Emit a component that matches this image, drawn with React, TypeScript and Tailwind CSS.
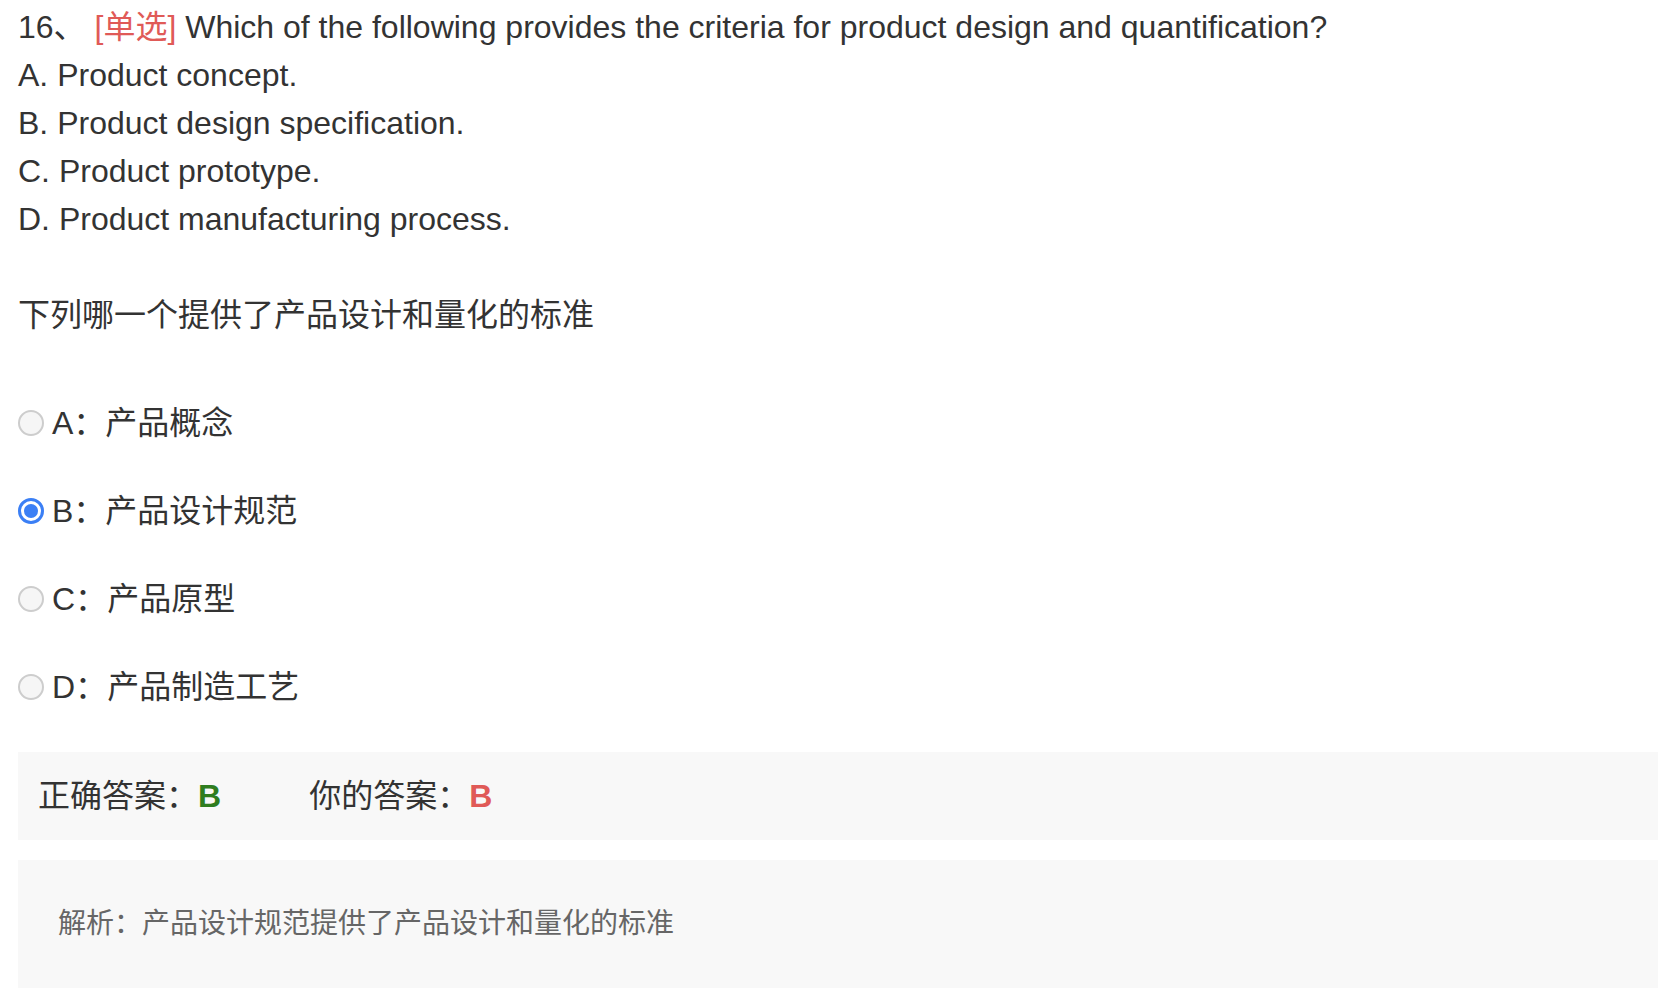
import React from 'react'

const options = [
  { key: 'A', text: '产品概念' },
  { key: 'B', text: '产品设计规范' },
  { key: 'C', text: '产品原型' },
  { key: 'D', text: '产品制造工艺' }
]

const selected = 'B'

function Radio({ checked }: { checked: boolean }) {
  if (checked) {
    return (
      <span className="flex h-[26px] w-[26px] shrink-0 items-center justify-center rounded-full border-[3px] border-[#3b7ff5] bg-white">
        <span className="h-[14px] w-[14px] rounded-full bg-[#3b7ff5]" />
      </span>
    )
  }
  return (
    <span className="h-[26px] w-[26px] shrink-0 rounded-full border-2 border-[#cdcdcd] bg-[#f6f6f6]" />
  )
}

export default function App() {
  return (
    <div
      className="min-h-screen bg-white text-[#333]"
      style={{ fontFamily: '"Liberation Sans", "Noto Sans CJK SC", sans-serif' }}
    >
      <div className="pl-[18px] pr-[16px] pt-[3px]">
        {/* 题干 */}
        <div className="text-[32px] leading-[48px]">
          <div>
            16、 <span className="text-[#e05a57]">[单选]</span> Which of the following provides the criteria for product design and quantification?
          </div>
          <div>A. Product concept.</div>
          <div>B. Product design specification.</div>
          <div>C. Product prototype.</div>
          <div>D. Product manufacturing process.</div>
          <div className="mt-[48px]">下列哪一个提供了产品设计和量化的标准</div>
        </div>

        {/* 选项 */}
        <div className="mt-[60px] flex flex-col gap-[40px]">
          {options.map((o) => (
            <label key={o.key} className="flex h-[48px] items-center text-[32px] leading-[48px]">
              <Radio checked={o.key === selected} />
              <span className="ml-[8px]">
                {o.key}：{o.text}
              </span>
            </label>
          ))}
        </div>

        {/* 答案 */}
        <div className="mt-[41px] flex h-[88px] items-center bg-[#f8f8f8] pl-[20px] text-[32px] leading-[48px]">
          <span>正确答案：</span>
          <span className="font-bold text-[#2f7d1f]">B</span>
          <span className="ml-[88px]">你的答案：</span>
          <span className="font-bold text-[#e05a57]">B</span>
        </div>

        {/* 解析 */}
        <div className="mt-[20px] flex h-[128px] items-center bg-[#f8f8f8] pl-[40px] text-[28px] leading-[40px] text-[#666]">
          解析：产品设计规范提供了产品设计和量化的标准
        </div>
      </div>
    </div>
  )
}
